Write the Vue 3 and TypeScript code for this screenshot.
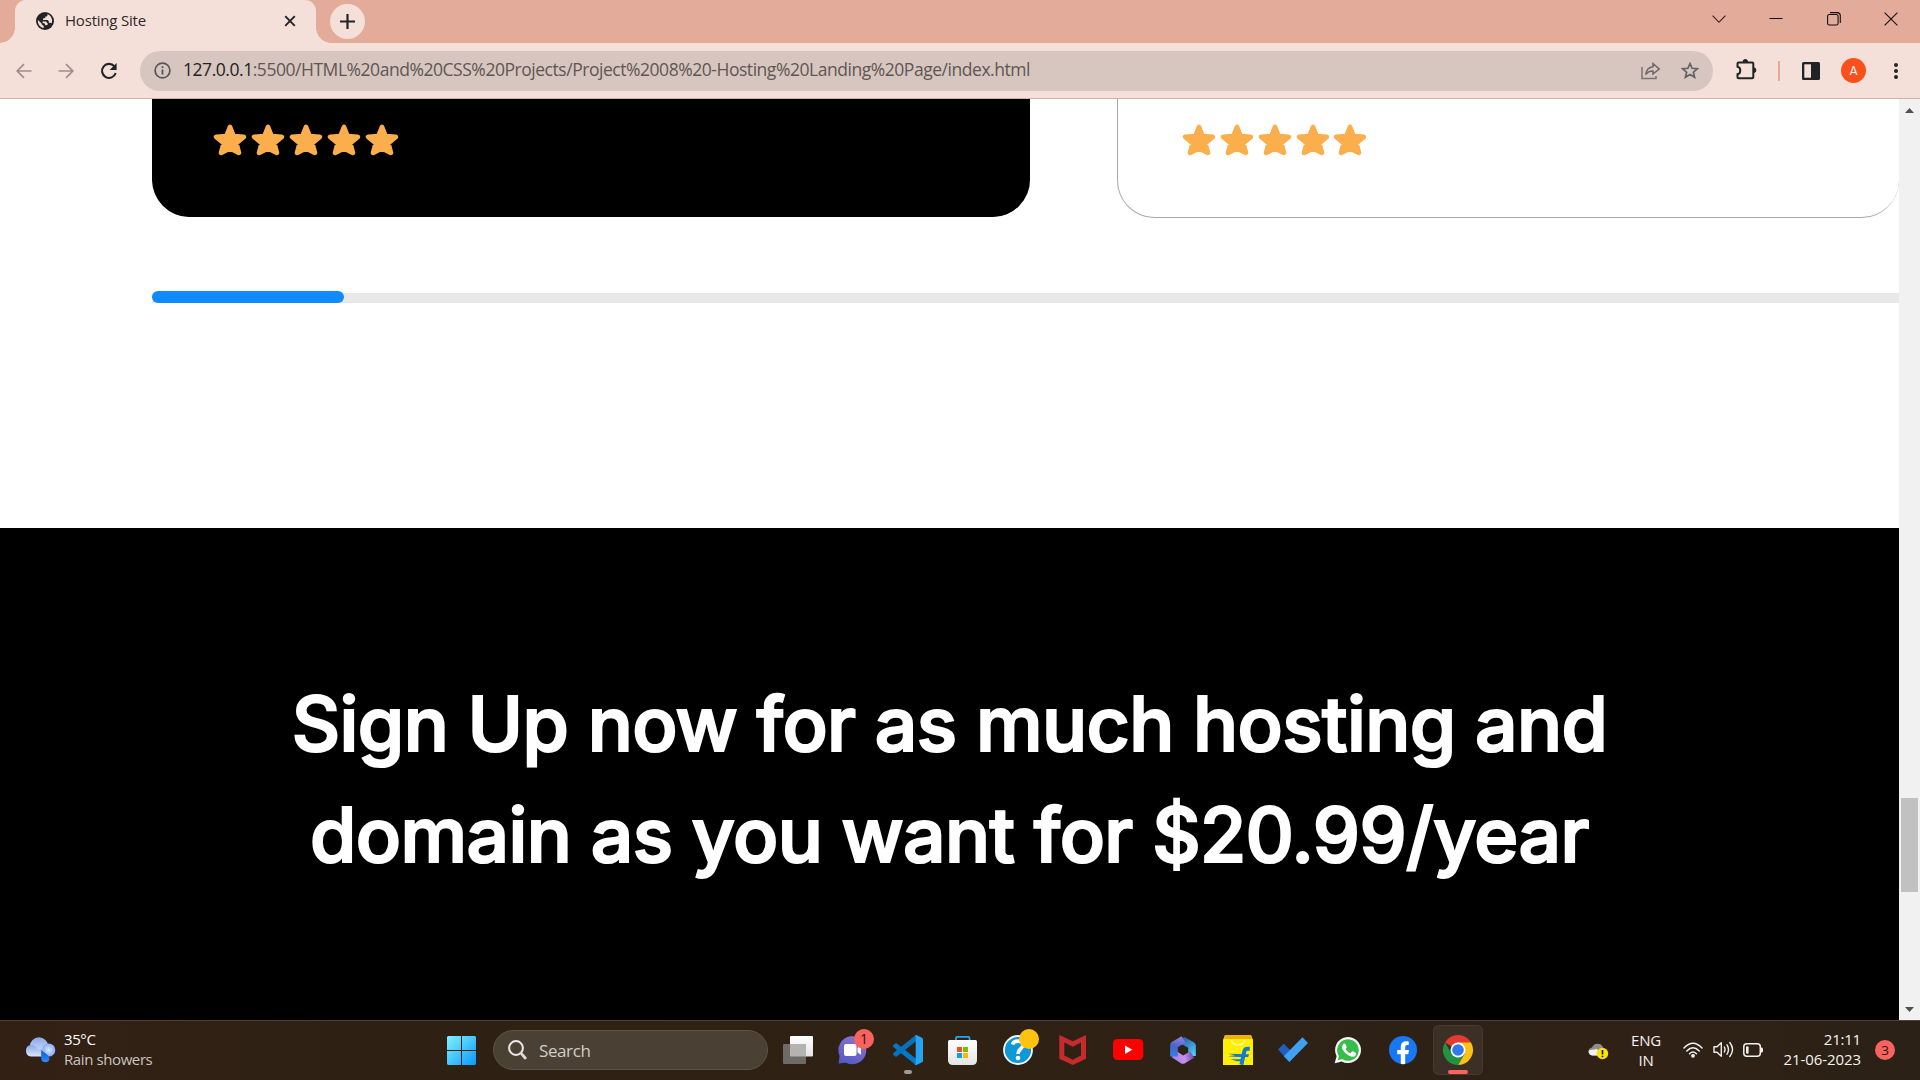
<script setup lang="ts">
interface Card { id: string; dark: boolean }

const cards: Card[] = [
  { id: 'first', dark: true },
  { id: 'second', dark: false },
]
const starCount = 5
const headline = ['Sign Up now for as much hosting and', 'domain as you want for $20.99/year']
const host = '127.0.0.1'
const path = ':5500/HTML%20and%20CSS%20Projects/Project%2008%20-Hosting%20Landing%20Page/index.html'
</script>

<template>
  <div class="screen">
    <header class="tabstrip">
      <div class="tab">
        <svg class="favicon" width="18" height="18" viewBox="0 0 18 18">
          <circle cx="9" cy="9" r="9" fill="#202427" />
          <path d="M1.900 8 5.600 11.400V12.300L7.700 13.900V16C4 15.500 1.500 12 1.900 8ZM11.500 2.200C15 3.200 17 7.200 15.700 11.200L14 10.700H12.800V9.200L11.600 8H7V6.500L9.300 6V4.400H10.800C11.400 3.900 11.600 3.200 11.500 2.200ZM6.500 9.600H10L12.200 12.200 9.500 13.400 8.600 11.400 6.500 10.800Z" fill="#f5e0d9" />
        </svg>
        <span class="tab-title">Hosting Site</span>
        <svg class="tab-close" width="12" height="12" viewBox="0 0 12 12"><path d="M1.200 1.200 10.800 10.800M10.800 1.200 1.200 10.800" stroke="#202427" stroke-width="1.900" /></svg>
      </div>
      <div class="newtab">
        <svg width="15" height="15" viewBox="0 0 15 15"><path d="M7.500 0V15M0 7.500H15" stroke="#202427" stroke-width="2.200" /></svg>
      </div>
      <div class="window-controls">
        <svg width="14" height="14" viewBox="0 0 14 14"><path d="M.6 3.700 7 10.300 13.400 3.700" fill="none" stroke="#2a1d19" stroke-width="1.100" /></svg>
        <svg width="14" height="14" viewBox="0 0 14 14"><path d="M.5 6.500H13.500" stroke="#111" /></svg>
        <svg width="14" height="14" viewBox="0 0 14 14"><rect x=".6" y="2.500" width="10.500" height="10.500" rx="1.800" fill="none" stroke="#111" stroke-width="1.100" /><path d="M3 .6H10.500A3 3 0 0 1 13.300 3.400V11" fill="none" stroke="#111" stroke-width="1.100" /></svg>
        <svg width="14" height="14" viewBox="0 0 14 14"><path d="M.6.600 13.400 13.400M13.400.600.6 13.400" stroke="#111" stroke-width="1.100" /></svg>
      </div>
    </header>

    <div class="toolbar">
      <svg class="nav-back" width="16" height="16" viewBox="0 0 16 16"><path d="M15.500 8H1.500M8 1.200 1.200 8 8 14.800" fill="none" stroke="#9c8f8b" stroke-width="1.700" /></svg>
      <svg class="nav-fwd" width="16" height="16" viewBox="0 0 16 16"><path d="M.5 8H14.500M8 1.200 14.800 8 8 14.800" fill="none" stroke="#9c8f8b" stroke-width="1.700" /></svg>
      <svg class="nav-reload" width="18" height="18" viewBox="0 0 18 18"><path d="M14.300 4.300A7 7 0 1 0 15.700 11" fill="none" stroke="#202427" stroke-width="2.100" /><path d="M16.600 1V8H9.600Z" fill="#202427" /></svg>
      <div class="omnibox">
        <svg class="info" width="17" height="17" viewBox="0 0 17 17"><circle cx="8.500" cy="8.500" r="7.400" fill="none" stroke="#54545a" stroke-width="1.700" /><path d="M8.500 7.500V12.500M8.500 4.300V6.100" stroke="#54545a" stroke-width="1.800" /></svg>
        <span class="url"><span class="url-host">{{ host }}</span>{{ path }}</span>
        <svg class="share" width="20" height="18" viewBox="0 0 20 18"><path d="M1 5V16.500H15V14" fill="none" stroke="#7b7371" stroke-width="1.500" /><path d="M12 1.500 18.200 7 12 12V9C8.500 9 6.500 10 4.800 12.500 5.300 8 7.500 5.200 12 4.700Z" fill="none" stroke="#6c6766" stroke-width="1.500" /></svg>
        <svg class="bookmark" width="18" height="17" viewBox="0 0 18 17"><path d="M9 1.600 11.100 6.300 16.300 6.800 12.400 10.200 13.600 15.300 9 12.600 4.400 15.300 5.600 10.200 1.700 6.800 6.900 6.300Z" fill="none" stroke="#5f6368" stroke-width="1.700" /></svg>
      </div>
      <svg class="puzzle" width="21" height="21" viewBox="0 0 21 21"><path d="M2.800 3.500H16.200Q17.300 3.500 17.300 4.600V18.200Q17.300 19.200 16.200 19.200H2.500Q1.500 19.200 1.500 18.200V15.200C5.200 14.500 5.200 8.300 1.500 7.700V4.600Q1.500 3.500 2.800 3.500Z" fill="none" stroke="#202427" stroke-width="2" /><path d="M7 3V2.800a2.300 2.300 0 0 1 4.600 0V3ZM17.500 8.800a2.300 2.300 0 0 1 0 4.800Z" fill="#202427" stroke="#202427" /></svg>
      <i class="divider"></i>
      <svg class="sidepanel" width="18" height="18" viewBox="0 0 18 18"><rect width="18" height="18" rx="1.500" fill="#202427" /><rect x="2.300" y="2.300" width="6.700" height="13.400" fill="#f5e0d9" /></svg>
      <div class="avatar">A</div>
      <svg class="menu" width="4" height="16" viewBox="0 0 4 16"><circle cx="2" cy="2" r="2" fill="#202427" /><circle cx="2" cy="8" r="2" fill="#202427" /><circle cx="2" cy="14" r="2" fill="#202427" /></svg>
    </div>

    <div class="viewport">
      <main class="page">
        <section class="reviews">
          <div class="cards">
            <article v-for="card in cards" :key="card.id" class="card" :class="{ dark: card.dark }">
              <svg v-for="n in starCount" :key="n" class="star" width="34" height="32" viewBox="0 0 34 32">
                <path d="M17 3 20.600 12.200 30.800 12.800 23.300 19.200 25.900 28.800 17 24.300 8.100 28.800 10.700 19.200 3.200 12.800 13.400 12.200Z" fill="#fbae4c" stroke="#fbae4c" stroke-width="4.800" stroke-linejoin="round" />
              </svg>
            </article>
          </div>
          <div class="slider"><div class="track"></div><div class="fill"></div></div>
        </section>
        <section class="signup">
          <h2><span v-for="line in headline" :key="line">{{ line }}</span></h2>
        </section>
      </main>
      <aside class="scrollbar">
        <svg width="9" height="5" viewBox="0 0 9 5"><path d="M4.500 0 9 5H0Z" fill="#505050" /></svg>
        <div class="thumb"></div>
        <svg width="9" height="5" viewBox="0 0 9 5"><path d="M0 0H9L4.500 5Z" fill="#505050" /></svg>
      </aside>
    </div>

    <footer class="taskbar">
      <div class="weather">
        <svg width="32" height="29" viewBox="0 0 32 29">
          <defs>
            <linearGradient id="cloud" x2="0" y2="1"><stop offset="0" stop-color="#89a9ea" /><stop offset="1" stop-color="#dce6fb" /></linearGradient>
            <radialGradient id="puff"><stop offset="0" stop-color="#dbe7fd" /><stop offset="1" stop-color="#86aaf0" /></radialGradient>
            <linearGradient id="drop" x2="0" y2="1"><stop offset="0" stop-color="#0a58c8" /><stop offset="1" stop-color="#2b8dff" /></linearGradient>
          </defs>
          <circle cx="15" cy="10.500" r="9.200" fill="url(#cloud)" />
          <path d="M7 9C11 9 12.500 11 13 13L24 14V20.500H7A5.800 5.800 0 0 1 7 9Z" fill="url(#cloud)" />
          <circle cx="24.700" cy="14" r="6.600" fill="url(#puff)" />
          <path d="M17.200 13.500C18 16 26 18.500 25.500 23A4.300 4.300 0 0 1 17.200 23Z" fill="url(#drop)" />
        </svg>
        <div class="weather-text"><span>35°C</span><span class="dim">Rain showers</span></div>
      </div>

      <svg class="start" width="29" height="29" viewBox="0 0 29 29">
        <defs><linearGradient id="win" gradientUnits="userSpaceOnUse" x1="0" y1="0" x2="29" y2="29"><stop offset="0" stop-color="#80f3ff" /><stop offset="1" stop-color="#0a98fb" /></linearGradient></defs>
        <path d="M1 0H14V14H0V1ZM15 0H28L29 1V14H15ZM0 15H14V29H1L0 28ZM15 15H29V28L28 29H15Z" fill="url(#win)" />
      </svg>
      <div class="search">
        <svg width="19" height="20" viewBox="0 0 19 20"><circle cx="8" cy="8" r="6.900" fill="none" stroke="#eeeae6" stroke-width="2" /><path d="M13 13.200 17.200 18" stroke="#dedad6" stroke-width="2.800" stroke-linecap="round" /></svg>
        <span>Search</span>
      </div>

      <div class="apps">
        <svg class="app" viewBox="0 0 55 60">
          <defs><linearGradient id="tv" x2="0" y2="1"><stop offset="0" stop-color="#fff" /><stop offset="1" stop-color="#e4e4e4" /></linearGradient></defs>
          <rect x="19" y="16" width="23" height="20.500" rx="1" fill="url(#tv)" />
          <rect x="12" y="24" width="23" height="20" rx="1" fill="#6d6a68" />
          <path d="M19 24H35V36.500H20Q19 36.500 19 35.500Z" fill="#b4b3b2" />
        </svg>
        <svg class="app" viewBox="0 0 55 60">
          <defs><linearGradient id="chat" x1=".7" x2=".2" y2="1"><stop offset="0" stop-color="#8d74c8" /><stop offset="1" stop-color="#5258c8" /></linearGradient></defs>
          <path d="M12.500 43.500 13.600 36A14 14 0 1 1 20 42.700Z" fill="url(#chat)" />
          <rect x="18" y="24" width="12.500" height="12" rx="2" fill="#fff" /><path d="M31.500 28 34 26Q35 25.500 35 26.700V33.500Q35 35 34 34.200L31.500 32.300Z" fill="#fff" />
          <circle cx="38" cy="19" r="10" fill="#f9635f" />
          <text x="38" y="24" text-anchor="middle" class="badge-num">1</text>
        </svg>
        <svg class="app" viewBox="0 0 55 60">
          <path d="M12 25.500 14.300 23.500Q15 23 15.800 23.500L36 39.500V44.500Q34.500 45 33.500 44L12.300 27Q11.600 26.200 12 25.500Z" fill="#0179cb" />
          <path d="M12 34.500 14.300 36.500Q15 37 15.800 36.500L36 20.500V15.300Q34.500 15 33.500 16L12.300 33Q11.600 33.800 12 34.500Z" fill="#0a70ba" />
          <path d="M33.600 15.600Q34.600 14.700 35.800 15.200L41 17.700Q42 18.200 42 19.300V40.700Q42 41.800 41 42.300L35.800 44.800Q34.600 45.300 33.600 44.400Q34.700 44.500 34.700 43V17Q34.700 15.500 33.600 15.600Z" fill="#27a4f1" />
          <rect x="23" y="50" width="8" height="4" rx="2" fill="#a09a94" />
        </svg>
        <svg class="app" viewBox="0 0 55 60">
          <path d="M20 22V18Q20 16.800 21.200 16.800H32.300Q33.500 16.800 33.500 18V22" fill="none" stroke="#22a9e8" stroke-width="1.800" />
          <path d="M13.500 20H39.500Q41 20 41 21.500V40Q41 45 36 45H17Q12 45 12 40V21.500Q12 20 13.500 20Z" fill="url(#tv)" />
          <path d="M21 27h5v5h-5z" fill="#f25022" /><path d="M27 27h5v5h-5z" fill="#7fba00" /><path d="M21 33h5v5h-5z" fill="#00a4ef" /><path d="M27 33h5v5h-5z" fill="#ffb900" />
        </svg>
        <svg class="app" viewBox="0 0 55 60">
          <circle cx="27" cy="30" r="14" fill="#0d98d8" stroke="#f5f9fb" stroke-width="1.800" />
          <path d="M21.500 24.500C22.500 20.500 31.500 19.500 32 24.800C32.300 28.600 27 28.600 27 34" fill="none" stroke="#fff" stroke-width="3.600" /><circle cx="27" cy="38" r="2.300" fill="#fff" />
          <circle cx="38" cy="19" r="10" fill="#ffc20e" />
        </svg>
        <svg class="app" viewBox="0 0 55 60">
          <path fill-rule="evenodd" d="M13.300 15 26.800 21.300 40 15V38.700L26.800 45 13.300 38.700ZM18.300 22.600V35.500L26.800 39.800 35 35.500V22.600L26.800 26.700Z" fill="#c52a2d" />
        </svg>
        <svg class="app" viewBox="0 0 55 60">
          <rect x="12" y="19" width="30.300" height="21" rx="4.500" fill="#fd0000" /><path d="M24 25.500 31.300 29.700 24 34Z" fill="#fff" />
        </svg>
        <svg class="app" viewBox="0 0 55 60">
          <defs>
            <linearGradient id="ma" gradientUnits="userSpaceOnUse" x1="24" y1="16" x2="17" y2="38"><stop offset="0" stop-color="#9184e8" /><stop offset=".5" stop-color="#4a63c8" /><stop offset="1" stop-color="#2f86e8" /></linearGradient>
            <linearGradient id="mb" gradientUnits="userSpaceOnUse" x1="26" y1="17" x2="38" y2="35"><stop offset="0" stop-color="#2a55a8" /><stop offset="1" stop-color="#4fd0f4" /></linearGradient>
            <linearGradient id="mc" gradientUnits="userSpaceOnUse" x1="18" y1="40" x2="39" y2="36"><stop offset="0" stop-color="#a884f0" /><stop offset=".5" stop-color="#c590f0" /><stop offset="1" stop-color="#5f45a0" /></linearGradient>
          </defs>
          <g fill="none" stroke-width="7.600" stroke-linejoin="round">
            <path d="M26 20.200 36 25.500V36" stroke="url(#mb)" />
            <path d="M17.800 34 27 40 36.200 34.500" stroke="url(#mc)" />
            <path d="M27.500 19.500 18 25V36.500" stroke="url(#ma)" />
          </g>
        </svg>
        <svg class="app" viewBox="0 0 55 60">
          <path d="M14 15H40L42 20V45H12V20Z" fill="#fff000" /><path d="M14 15H40L41 19H13Z" fill="#f0b400" />
          <path d="M20.500 20A6.700 6.700 0 0 0 33.500 20" fill="none" stroke="#fff5a8" stroke-width="1.400" />
          <path d="M38.800 28.800H36.500Q33.900 28.800 33.300 31.500L30.400 44.800" fill="none" stroke="#147bd1" stroke-width="4" />
          <path d="M17 33.800 38 34.200 37.300 37H26.500L17 36.200 24 35.300ZM19.500 39.200H31V41.200H26Z" fill="#147bd1" />
        </svg>
        <svg class="app" viewBox="0 0 55 60">
          <path d="M12 29.500 17.700 23.700 29 35 23.300 42Z" fill="#1e5fc2" /><path d="M17.800 36.200 36.500 17.300 42 23 23.400 42Z" fill="#3ea0ee" />
        </svg>
        <svg class="app" viewBox="0 0 55 60">
          <path d="M13.700 43.200 15.600 36.200A13 13 0 1 1 20.700 41.400Z" fill="#f8faf8" />
          <path d="M16.800 40.200 17.900 36A10.800 10.800 0 1 1 21 39.100Z" fill="#36bd4b" />
          <path d="M22.600 23.700Q23.700 23 24.600 24.300L25.700 26.900Q25.800 27.700 24.500 29 26.100 32 29.500 33.200L31 31.500Q31.500 31 32.500 31.600L35 32.900Q35.400 36.500 31.700 36.700C27.500 36.700 21.500 31.500 21 27.500Q20.900 25.200 22.600 23.700Z" fill="#fff" />
        </svg>
        <svg class="app" viewBox="0 0 55 60">
          <circle cx="27" cy="30" r="14" fill="#1877f2" />
          <path d="M24.800 44V34.200H21.200V30H24.800V27C24.800 22.500 28 20.600 32.700 21.600V25C30.500 25 29.200 25 29.200 27.500V30H33L32.300 34.200H29.200V44Q27 44.300 24.800 44Z" fill="#fff" />
        </svg>
        <svg class="app" viewBox="0 0 55 60">
          <rect x="2.500" y="5.500" width="49" height="49" rx="5" fill="#3c3026" stroke="#463a31" />
          <path d="M27 30 14 22.500A15 15 0 0 1 40 22.500Z" fill="#e33b2e" />
          <path d="M27 22.500H40A15 15 0 0 1 27 45L33.500 33.700Z" fill="#fbc116" />
          <path d="M14 22.500A15 15 0 0 0 27 45L33.500 33.700 27 30 20.500 33.700Z" fill="#229342" />
          <circle cx="27" cy="30" r="7.500" fill="#fff" /><circle cx="27" cy="30" r="5.800" fill="#2f7bea" />
          <rect x="17" y="50" width="20" height="4" rx="2" fill="#f9635f" />
        </svg>
      </div>

      <div class="tray">
        <svg class="cloud" width="21" height="18" viewBox="0 0 21 18"><path d="M4 13.500A4 4 0 0 1 4 5.600 6 6 0 0 1 15 5.200L18 12 10 13.500Z" fill="#8f8d8a" /><path d="M4 13.500A3.800 3.800 0 0 1 1 8.200L9 7 13 13.500Z" fill="#f1f1f0" /><circle cx="14.500" cy="11.500" r="5.700" fill="#fde300" /><path d="M14.500 8V12.400M14.500 13.700V15.200" stroke="#181400" stroke-width="1.600" /></svg>
        <div class="lang"><span>ENG</span><span>IN</span></div>
        <svg class="wifi" width="20" height="16" viewBox="0 0 20 16"><g fill="none" stroke="#f3f0ed" stroke-width="1.500" stroke-linecap="round"><path d="M1 6Q10-3.500 19 6M3.800 9Q10 2.500 16.200 9M6.600 11.700Q10 8.300 13.400 11.700" /></g><circle cx="10" cy="13.800" r="1.900" fill="#f3f0ed" /></svg>
        <svg class="sound" width="21" height="17" viewBox="0 0 21 17"><g fill="none" stroke="#f3f0ed" stroke-width="1.400" stroke-linecap="round" stroke-linejoin="round"><path d="M1 5.800H4L8.300 1.700V15.300L4 11.200H1ZM11.300 6Q12.700 8.500 11.300 11M14 3.800Q17 8.500 14 13.200M16.800 1.500Q22.300 8.500 16.800 15.500" /></g></svg>
        <svg class="battery" width="21" height="14" viewBox="0 0 21 14"><rect x=".8" y=".8" width="16.500" height="12.400" rx="3" fill="none" stroke="#f3f0ed" stroke-width="1.500" /><rect x="3" y="3.300" width="2.600" height="7.400" rx="1" fill="#f3f0ed" /><path d="M18 4.500H18.600Q20 4.500 20 6V8Q20 9.500 18.600 9.500H18Z" fill="#f3f0ed" /></svg>
        <div class="clock"><span class="time">21:11</span><span class="date">21-06-2023</span></div>
        <div class="notif">3</div>
      </div>
    </footer>
  </div>
</template>

<style>
body { margin: 0; overflow: hidden; background: #fff; }
</style>

<style scoped>
.screen { width: 1920px; height: 1080px; display: flex; flex-direction: column; overflow: hidden; font-family: "Open Sans", "Noto Sans", sans-serif; }
svg { display: block; flex: none; }

.tabstrip { height: 43px; flex: none; display: flex; background: #e3ab99; }
.tab { position: relative; box-sizing: border-box; width: 301px; height: 43px; margin-left: 15px; padding: 0 21px; display: flex; align-items: center; background: #f5e0d9; border-radius: 11px 11px 0 0; }
.tab::before, .tab::after { content: ""; position: absolute; bottom: 0; width: 15px; height: 15px; }
.tab::before { left: -15px; background: radial-gradient(circle at 0 0, transparent 14.500px, #f5e0d9 15px); }
.tab::after { right: -15px; background: radial-gradient(circle at 100% 0, transparent 14.500px, #f5e0d9 15px); }
.favicon { margin: -1px 11px 0 0; }
.tab-title { flex: 1; font-size: 15px; letter-spacing: -0.200px; color: #2c2a2a; line-height: 20px; margin-top: -4px; white-space: nowrap; }
.tab-close { margin: -1px -1px 0 0; }
.newtab { width: 35px; height: 35px; margin: 4px 0 0 14px; border-radius: 50%; background: #f5e0d9; display: flex; align-items: center; justify-content: center; }
.window-controls { margin: 12px 22px 0 auto; display: flex; gap: 43.500px; }

.toolbar { height: 55px; flex: none; display: flex; align-items: center; background: #f5e0d9; border-bottom: 1px solid #c8b2ae; padding-left: 16px; }
.toolbar > * { flex: none; }
.nav-fwd { margin-left: 26px; }
.nav-reload { margin-left: 26px; }
.omnibox { box-sizing: border-box; width: 1573px; height: 40px; margin-left: 22px; padding: 0 14px; border-radius: 20px; background: #d7c6bf; display: flex; align-items: center; }
.url { flex: none; margin-left: 12px; width: 1458px; font-size: 17.500px; letter-spacing: -0.460px; color: #5f5654; white-space: nowrap; line-height: 24px; margin-top: -3px; }
.url-host { color: #242222; }
.bookmark { margin-left: 20px; }
.puzzle { margin: -3px 0 0 23px; }
.divider { width: 2px; height: 20px; margin-left: 21px; background: #e3ab99; }
.sidepanel { margin-left: 22px; }
.avatar { width: 25px; height: 25px; margin-left: 21px; border-radius: 50%; background: #fa501c; color: #fff; font: 12.500px/26px Roboto, sans-serif; text-align: center; }
.menu { margin-left: 28px; }

.viewport { height: 921px; flex: none; display: flex; }
.page { width: 1899px; overflow: hidden; background: #fff; display: flex; flex-direction: column; }
.reviews { height: 429px; flex: none; padding-left: 152px; display: flex; flex-direction: column; }
.cards { display: flex; gap: 87px; }
.card { box-sizing: border-box; flex: none; width: 782px; height: 120px; margin-top: -1px; padding: 26px 0 0 64px; display: flex; gap: 3.850px; border: 1px solid #aaa; border-top: 0; border-right: 0; border-radius: 0 0 37.500px 37.500px; background: #fff; }
.card.dark { width: 878px; height: 119px; padding-left: 60.300px; background: #000; border-color: #000; }
.star { flex: none; }
.slider { margin-top: 73px; height: 12px; display: grid; }
.slider > * { grid-area: 1 / 1; }
.track { height: 10px; align-self: end; background: #e8e8e8; }
.fill { width: 192px; height: 12px; border-radius: 6px; background: #0f8bff; }
.signup { flex: 1; background: #000; display: flex; justify-content: center; }
h2 { margin: 140px 0 0; display: flex; flex-direction: column; align-items: center; font: 500 75px/111px Inter, sans-serif; letter-spacing: -0.610px; color: #fff; -webkit-text-stroke: 2.200px #fff; white-space: nowrap; }
.scrollbar { width: 21px; background: #f1f1f1; display: flex; flex-direction: column; align-items: center; }
.scrollbar svg:first-child { margin-top: 9px; }
.thumb { width: 17px; height: 94px; margin-top: 685px; margin-bottom: 115px; background: #c1c1c1; }

.taskbar { height: 60px; flex: none; box-sizing: border-box; display: flex; background: linear-gradient(90deg, #332015, #2e2114 18%, #2f2114 50%, #2d2116 75%, #302116 85%, #2b2116); box-shadow: inset 0 1px #4d4037; }
.taskbar > * { flex: none; }
.weather { width: 447px; display: flex; padding-left: 24px; box-sizing: border-box; }
.weather svg { margin-top: 16px; }
.weather-text { margin: 9px 0 0 8px; display: flex; flex-direction: column; font-size: 15px; line-height: 20px; letter-spacing: -0.400px; color: #fff; white-space: nowrap; }
.dim { color: #c9c4c0; }
.start { margin-top: 16px; }
.search { box-sizing: border-box; width: 275px; height: 40px; margin: 10px 3px 0 17px; border-radius: 20px; background: #4b4034; border: 1px solid #5d5247; display: flex; align-items: center; padding-left: 14px; color: #d2cdc8; font-size: 17px; letter-spacing: -0.400px; }
.search span { margin-left: 12px; }
.apps { display: flex; }
.app { width: 55px; height: 60px; }
.badge-num { font-size: 14px; fill: #2b1210; }
.tray { display: flex; color: #f5f2ef; font-size: 15px; line-height: 20px; letter-spacing: -0.200px; white-space: nowrap; }
.cloud { margin: 22px 0 0 102px; }
.lang { width: 40px; margin: 10px 0 0 17px; display: flex; flex-direction: column; align-items: center; }
.wifi { margin: 22px 0 0 17px; }
.sound { margin: 21px 0 0 10px; }
.battery { margin: 23px 0 0 9px; }
.clock { width: 97px; margin-top: 9px; display: flex; flex-direction: column; align-items: flex-end; }
.date { letter-spacing: -0.080px; }
.notif { width: 20px; height: 20px; margin: 20px 0 0 14px; border-radius: 50%; background: #f9635f; color: #2b1210; text-align: center; font-size: 13.500px; letter-spacing: 0; }
</style>
